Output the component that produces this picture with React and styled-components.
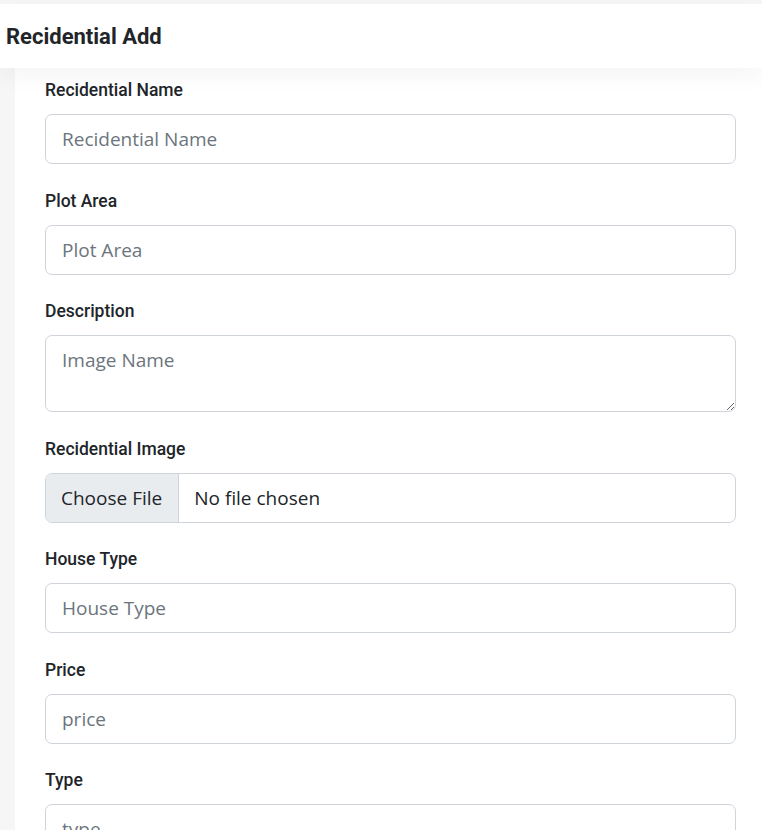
import React from "react";
import styled, { createGlobalStyle } from "styled-components";

const GlobalStyle = createGlobalStyle`
  html, body {
    margin: 0;
    padding: 0;
    background: #f6f6f6;
  }
  body {
    font-family: Roboto, "Liberation Sans", sans-serif;
    color: #212529;
  }
  * { box-sizing: border-box; }
`;

const Page = styled.div`
  padding-top: 4px;
  min-height: 830px;
`;

const Header = styled.header`
  position: relative;
  z-index: 1;
  height: 64px;
  background: #ffffff;
  display: flex;
  align-items: center;
  padding: 0 6px;
  box-shadow: 0 8px 24px rgba(0, 0, 0, 0.045);
`;

const Title = styled.h1`
  margin: 0;
  font-family: Roboto, "Liberation Sans", sans-serif;
  font-size: 22px;
  font-weight: 700;
  color: #212529;
`;

const Main = styled.main`
  margin-left: 15px;
  background: #ffffff;
  padding: 10px 26px 0 30px;
  min-height: 762px;
`;

const Form = styled.form`
  display: flex;
  flex-direction: column;
`;

const Group = styled.div`
  display: flex;
  flex-direction: column;
  margin-bottom: 24.5px;
`;

const Label = styled.label`
  font-family: Roboto, "Liberation Sans", sans-serif;
  font-size: 17.5px;
  font-weight: 500;
  line-height: 24px;
  margin-bottom: 12px;
  color: #212529;
`;

const Field = styled.input`
  width: 100%;
  height: 50px;
  padding: 0 16px;
  font-family: "Open Sans", "Noto Sans", sans-serif;
  font-size: 19px;
  color: #212529;
  background: #fff;
  border: 1px solid #ced4da;
  border-radius: 7px;
  outline: none;

  &::placeholder {
    color: #6c757d;
  }
`;

const Area = styled.textarea`
  width: 100%;
  height: 77px;
  padding: 10px 16px;
  font-family: "Open Sans", "Noto Sans", sans-serif;
  font-size: 19px;
  line-height: 28px;
  color: #212529;
  border: 1px solid #ced4da;
  border-radius: 7px;
  outline: none;
  resize: vertical;

  &::placeholder {
    color: #6c757d;
  }
`;

const FileField = styled(Field)`
  padding: 0;
  line-height: 48px;
  overflow: hidden;

  &::file-selector-button {
    height: 48px;
    padding: 0 16px 0 15px;
    margin: 0 15px 0 0;
    font-family: "Open Sans", "Noto Sans", sans-serif;
    font-size: 19px;
    color: #212529;
    background: #e9ecef;
    border: 0;
    border-right: 1px solid #ced4da;
    border-radius: 0;
  }
`;

const fields = [
  { label: "Recidential Name", placeholder: "Recidential Name" },
  { label: "Plot Area", placeholder: "Plot Area" },
  { label: "Description", placeholder: "Image Name", area: true },
  { label: "Recidential Image", file: true },
  { label: "House Type", placeholder: "House Type" },
  { label: "Price", placeholder: "price" },
  { label: "Type", placeholder: "type" },
];

export default function App() {
  return (
    <Page>
      <GlobalStyle />
      <Header>
        <Title>Recidential Add</Title>
      </Header>
      <Main>
        <Form onSubmit={(e) => e.preventDefault()}>
          {fields.map((f, i) => (
            <Group key={i}>
              <Label htmlFor={"f" + i}>{f.label}</Label>
              {f.area ? (
                <Area id={"f" + i} placeholder={f.placeholder} />
              ) : f.file ? (
                <FileField id={"f" + i} type="file" />
              ) : (
                <Field id={"f" + i} type="text" placeholder={f.placeholder} />
              )}
            </Group>
          ))}
        </Form>
      </Main>
    </Page>
  );
}
